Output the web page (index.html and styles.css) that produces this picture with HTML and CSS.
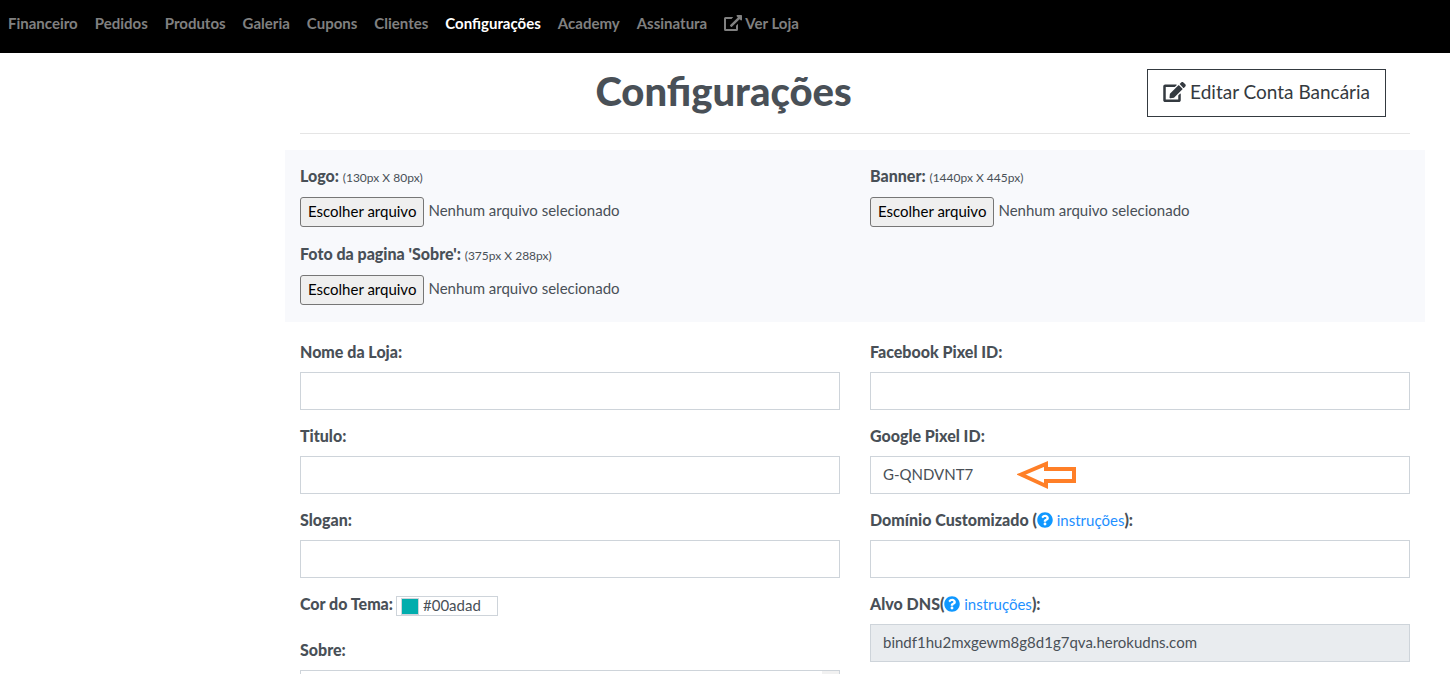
FILE: index.html
```html
<!DOCTYPE html>
<html lang="pt-BR">
<head>
  <meta charset="UTF-8">
  <meta name="viewport" content="width=device-width, initial-scale=1.0">
  <title>Configurações</title>
  <link rel="stylesheet" href="styles.css">
</head>
<body>

  <!-- Icons -->
  <svg class="sprite" aria-hidden="true">
    <symbol id="icon-question" viewBox="0 0 512 512">
      <path d="M504 256c0 137-111 248-248 248S8 393 8 256 119 8 256 8s248 111 248 248zM262.700 90c-54.500 0-89.300 23-116.500 63.800-3.500 5.300-2.400 12.400 2.700 16.300l34.700 26.300c5.200 3.900 12.600 3 16.700-2.100 17.900-22.700 30.100-35.800 57.300-35.800 20.400 0 45.700 13.100 45.700 33 0 15-12.400 22.700-32.500 34C247.100 238.500 216 254.900 216 296v4c0 6.600 5.400 12 12 12h56c6.600 0 12-5.400 12-12v-1.300c0-28.500 83.200-29.600 83.200-106.700 0-58-60.200-102-116.500-102zM256 338c-25.400 0-46 20.600-46 46s20.600 46 46 46 46-20.600 46-46-20.600-46-46-46z"/>
    </symbol>
  </svg>

  <nav class="navbar">
    <a href="#">Financeiro</a>
    <a href="#">Pedidos</a>
    <a href="#">Produtos</a>
    <a href="#">Galeria</a>
    <a href="#">Cupons</a>
    <a href="#">Clientes</a>
    <a href="#" class="active">Configurações</a>
    <a href="#">Academy</a>
    <a href="#">Assinatura</a>
    <a href="#" class="with-icon">
      <svg class="icon-external" viewBox="0 0 576 512" aria-hidden="true">
        <path d="M448 279v185a48 48 0 0 1-48 48H48a48 48 0 0 1-48-48V112a48 48 0 0 1 48-48h248l-56 64H64v320h320V343zM576 24v128c0 21-26 32-41 17l-36-36-244 245c-9 9-25 9-34 0l-23-23c-9-9-9-25 0-34L443 77l-36-36c-15-15-4-41 17-41h128a24 24 0 0 1 24 24z"/>
      </svg>
      Ver Loja
    </a>
  </nav>

  <main class="container">
    <header class="page-header">
      <h1>Configurações</h1>
      <button type="button" class="btn-outline">
        <svg class="icon-edit" viewBox="0 0 576 512" aria-hidden="true">
          <path d="M402.600 83.200l90.200 90.200c3.800 3.800 3.800 10 0 13.800L274.400 405.600l-92.800 10.300c-12.400 1.400-22.900-9.100-21.500-21.500l10.300-92.800L388.800 83.200c3.800-3.800 10-3.800 13.800 0zm162-22.900l-48.800-48.800c-15.200-15.200-39.900-15.200-55.200 0l-35.400 35.400c-3.800 3.800-3.800 10 0 13.800l90.200 90.200c3.800 3.800 10 3.800 13.800 0l35.400-35.400c15.200-15.300 15.200-40 0-55.200zM384 346.200V448H64V128h229.800c3.200 0 6.200-1.300 8.500-3.500l40-40c7.600-7.600 2.200-20.500-8.500-20.500H48C21.500 64 0 85.500 0 112v352c0 26.500 21.500 48 48 48h352c26.500 0 48-21.500 48-48V306.200c0-10.700-12.900-16-20.500-8.500l-40 40c-2.200 2.300-3.500 5.300-3.500 8.500z"/>
        </svg>
        Editar Conta Bancária
      </button>
    </header>

    <form>
      <section class="uploads grid">
        <div class="form-group">
          <label for="logo">Logo: <small>(130px X 80px)</small></label>
          <div class="file">
            <input type="file" id="logo" hidden>
            <button type="button">Escolher arquivo</button>
            <span>Nenhum arquivo selecionado</span>
          </div>
        </div>
        <div class="form-group">
          <label for="banner">Banner: <small>(1440px X 445px)</small></label>
          <div class="file">
            <input type="file" id="banner" hidden>
            <button type="button">Escolher arquivo</button>
            <span>Nenhum arquivo selecionado</span>
          </div>
        </div>
        <div class="form-group">
          <label for="foto">Foto da pagina 'Sobre': <small>(375px X 288px)</small></label>
          <div class="file">
            <input type="file" id="foto" hidden>
            <button type="button">Escolher arquivo</button>
            <span>Nenhum arquivo selecionado</span>
          </div>
        </div>
      </section>

      <section class="fields grid">
        <div class="column">
          <div class="form-group">
            <label for="nome">Nome da Loja:</label>
            <input type="text" id="nome" class="form-control">
          </div>
          <div class="form-group">
            <label for="titulo">Titulo:</label>
            <input type="text" id="titulo" class="form-control">
          </div>
          <div class="form-group">
            <label for="slogan">Slogan:</label>
            <input type="text" id="slogan" class="form-control">
          </div>
          <div class="form-group theme">
            <label for="cor">Cor do Tema:</label>
            <div class="color-box">
              <input type="color" value="#00adad" aria-label="Escolher cor">
              <input type="text" id="cor" value="#00adad">
            </div>
          </div>
          <div class="form-group">
            <label for="sobre">Sobre:</label>
            <textarea id="sobre" class="form-control"></textarea>
          </div>
        </div>

        <div class="column">
          <div class="form-group">
            <label for="facebook">Facebook Pixel ID:</label>
            <input type="text" id="facebook" class="form-control">
          </div>
          <div class="form-group">
            <label for="google">Google Pixel ID:</label>
            <div class="marked">
              <input type="text" id="google" class="form-control" value="G-QNDVNT7">
              <svg class="arrow" viewBox="0 0 60 30" aria-hidden="true">
                <path d="M4 14.500L29 4v5h28v12H29v5z"/>
              </svg>
            </div>
          </div>
          <div class="form-group">
            <label for="dominio">Domínio Customizado (<a href="#"><svg class="icon-help" aria-hidden="true"><use href="#icon-question"/></svg> instruções</a>):</label>
            <input type="text" id="dominio" class="form-control">
          </div>
          <div class="form-group">
            <label for="dns">Alvo DNS(<a href="#"><svg class="icon-help" aria-hidden="true"><use href="#icon-question"/></svg> instruções</a>):</label>
            <input type="text" id="dns" class="form-control" value="bindf1hu2mxgewm8g8d1g7qva.herokudns.com" readonly>
          </div>
        </div>
      </section>
    </form>
  </main>

  <script>
    document.querySelectorAll('.file').forEach(box => {
      const input = box.querySelector('input');
      box.querySelector('button').addEventListener('click', () => input.click());
      input.addEventListener('change', () => {
        box.querySelector('span').textContent = input.files.length ? input.files[0].name : 'Nenhum arquivo selecionado';
      });
    });
  </script>

</body>
</html>
```
FILE: styles.css
```css
:root {
  --text: #495057;
  --border: #ced4da;
  --link: #1e90ff;
}

* { box-sizing: border-box; }

body {
  display: flex;
  flex-direction: column;
  height: 100vh;
  margin: 0;
  font-family: Lato, "Liberation Sans", sans-serif;
  font-size: 15px;
  line-height: 22px;
  color: var(--text);
  background: #fff;
}

input, button, textarea { font: inherit; }
a { color: var(--link); text-decoration: none; }

.sprite { position: absolute; width: 0; height: 0; }

/* Navbar */
.navbar {
  display: flex;
  flex: none;
  gap: 17px;
  padding: 12px 8px 19px;
  background: #000;
  font-weight: 700;
}
.navbar a { color: #808080; }
.navbar .active { color: #fff; }
.with-icon { display: flex; align-items: center; gap: 3px; }
.icon-external { width: 18px; height: 16px; fill: currentColor; }

/* Page header */
.container {
  flex: 1;
  min-height: 0;
  padding: 0 25px 0 285px;
  overflow-y: auto;
  scrollbar-width: none;
}
.page-header {
  display: flex;
  align-items: center;
  margin: 0 15px 16px;
  padding: 16px 24px 16px 0;
  border-bottom: 1px solid #e5e5e5;
}
.page-header h1 {
  flex: 1;
  margin: 0;
  padding-bottom: 4px;
  font-size: 40px;
  line-height: 44px;
  font-weight: 900;
  text-align: center;
}
.btn-outline {
  display: flex;
  align-items: center;
  gap: 4px;
  height: 48px;
  padding: 0 15px 2px;
  border: 1px solid #343a40;
  background: #fff;
  color: #343a40;
  font-size: 19px;
}
.icon-edit { width: 23px; height: 20px; fill: currentColor; }

/* Form */
.grid {
  display: grid;
  grid-template-columns: 1fr 1fr;
  column-gap: 30px;
  padding: 0 15px;
}
.uploads { padding-top: 15px; padding-bottom: 1px; background: #f8f9fc; }
.fields { margin-top: 19px; }
.form-group { margin-bottom: 16px; }
.form-group label {
  display: block;
  height: 22px;
  margin-bottom: 8px;
  font-size: 16px;
  font-weight: 900;
}
label small { font-size: 12px; font-weight: 400; }
label a { font-size: 15px; font-weight: 400; }
.icon-help {
  width: 16px;
  height: 16px;
  fill: #1098ff;
  vertical-align: -2px;
}

.file { display: flex; align-items: flex-end; gap: 4px; height: 32px; }
.file button {
  height: 30px;
  padding: 0 7px 3px;
  border: 1px solid #767676;
  border-radius: 3px;
  background: #efefef;
  color: #000;
}
.file span { padding-bottom: 6px; }

.form-control {
  display: block;
  width: 100%;
  height: 38px;
  padding: 5px 12px 7px;
  border: 1px solid var(--border);
  border-radius: 0;
  background: #fff;
  color: var(--text);
}
.form-control[readonly] { background: #e9ecef; }
.fields label { margin-bottom: 9px; }
.fields .form-group { margin-bottom: 15px; }
textarea.form-control {
  height: 120px;
  overflow-y: scroll;
  background: linear-gradient(#f1f1f1, #f1f1f1) right / 17px 100% no-repeat;
}

.marked { position: relative; }
.arrow {
  position: absolute;
  top: 4px;
  left: 147px;
  width: 60px;
  height: 30px;
  fill: none;
  stroke: #ff7f27;
  stroke-width: 4;
}

.theme { display: flex; gap: 3px; height: 31px; }
.color-box {
  display: flex;
  align-items: flex-end;
  width: 102px;
  height: 20px;
  margin-top: 3px;
  padding-left: 4px;
  border: 1px solid var(--border);
}
.color-box input { border: 0; padding: 0; background: none; color: var(--text); }
.color-box input[type="color"] {
  flex: none;
  width: 18px;
  height: 17px;
  margin-right: 4px;
  border: 1px solid var(--border);
}
.color-box input[type="color"]::-webkit-color-swatch-wrapper { padding: 0; }
.color-box input[type="color"]::-webkit-color-swatch { border: 0; }
.color-box input[type="text"] { flex: 1; min-width: 0; height: 18px; padding-bottom: 2px; }
```
